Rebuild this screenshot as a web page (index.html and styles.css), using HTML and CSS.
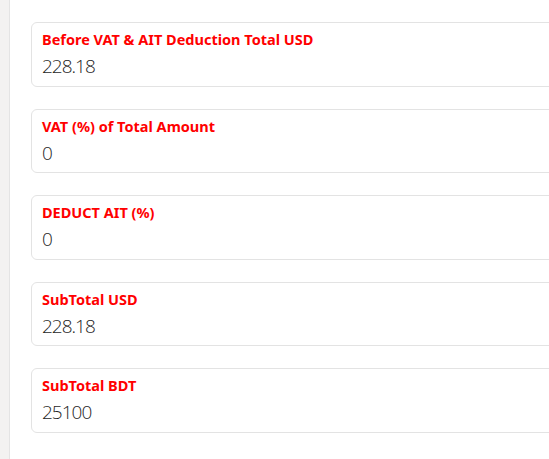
FILE: index.html
```html
<!DOCTYPE html>
<html>
<head>
<meta charset="utf-8">
<link rel="stylesheet" href="styles.css">
</head>
<body>
<div class="page">
  <aside class="rail"></aside>
  <main class="content">
    <div class="field">
      <div class="label">Before VAT &amp; AIT Deduction Total USD</div>
      <div class="value">228.18</div>
    </div>
    <div class="field">
      <div class="label">VAT (%) of Total Amount</div>
      <div class="value">0</div>
    </div>
    <div class="field">
      <div class="label">DEDUCT AIT (%)</div>
      <div class="value">0</div>
    </div>
    <div class="field">
      <div class="label">SubTotal USD</div>
      <div class="value">228.18</div>
    </div>
    <div class="field">
      <div class="label">SubTotal BDT</div>
      <div class="value">25100</div>
    </div>
  </main>
</div>
</body>
</html>
```

FILE: styles.css
```css
html, body {
  margin: 0;
  padding: 0;
  background: #ffffff;
  overflow: hidden;
}
.page {
  display: flex;
  height: 459px;
  width: 549px;
}
.rail {
  width: 9px;
  flex: none;
  background: #f3f2f1;
  border-right: 1px solid #e4e4e4;
}
.content {
  flex: 1;
  padding: 22px 0 0 21px;
  display: flex;
  flex-direction: column;
  gap: 22px;
  overflow: hidden;
}
.field {
  width: 560px;
  flex: none;
  box-sizing: border-box;
  height: 64.5px;
  border: 1px solid #e3e3e3;
  border-radius: 6px;
  padding: 6px 0 0 10px;
  font-family: "Noto Sans", "Open Sans", sans-serif;
}
.label {
  color: #ff0000;
  font-weight: 700;
  font-size: 14.5px;
  line-height: 20px;
}
.value {
  margin-top: 4px;
  color: #1f1f1f;
  font-size: 19px;
  font-weight: 300;
  line-height: 26px;
  letter-spacing: -1px;
  font-family: "Open Sans", "Noto Sans", sans-serif;
}
```
